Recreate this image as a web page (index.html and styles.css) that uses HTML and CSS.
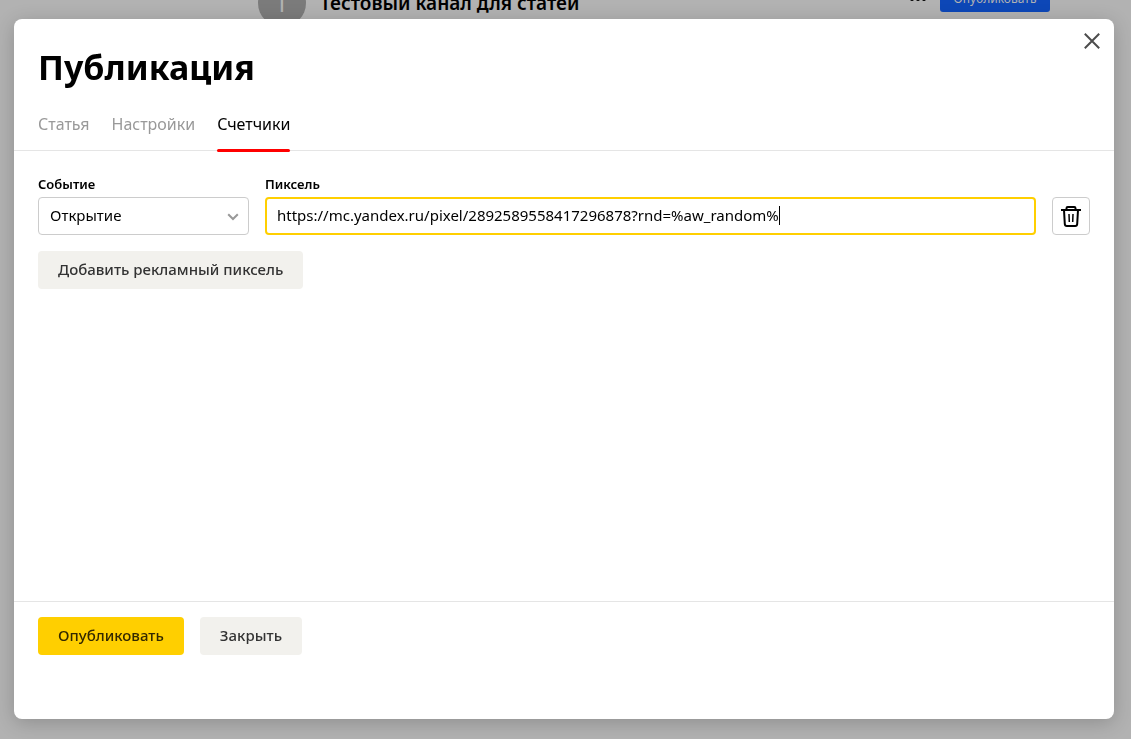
FILE: index.html
```html
<!DOCTYPE html>
<html lang="ru">
<head>
<meta charset="utf-8">
<meta name="viewport" content="width=device-width, initial-scale=1">
<title>Публикация</title>
<link rel="stylesheet" href="styles.css">
</head>
<body>
<header class="channel">
  <span class="channel-avatar">Т</span>
  <span class="channel-name">Тестовый канал для статей</span>
  <button class="channel-more" type="button" aria-label="Ещё">
    <svg width="16" height="4" viewBox="0 0 16 4" fill="currentColor"><circle cx="2" cy="2" r="2"/><circle cx="8" cy="2" r="2"/><circle cx="14" cy="2" r="2"/></svg>
  </button>
  <button class="channel-publish" type="button">Опубликовать</button>
</header>

<div class="overlay">
  <section class="modal" role="dialog" aria-labelledby="title">
    <button class="close" type="button" aria-label="Закрыть окно">
      <svg width="16" height="16" viewBox="0 0 16 16" fill="none" stroke="currentColor" stroke-width="2"><path d="M.8.8l14.400 14.400M15.200.8L.8 15.200"/></svg>
    </button>
    <h1 class="title" id="title">Публикация</h1>
    <nav class="tabs">
      <a class="tab" href="#article">Статья</a>
      <a class="tab" href="#settings">Настройки</a>
      <a class="tab tab-active" href="#counters">Счетчики</a>
    </nav>
    <form class="content">
      <div class="row">
        <div class="field field-event">
          <label class="label" for="event">Событие</label>
          <div class="select-box">
            <select class="select" id="event"><option>Открытие</option></select>
            <svg class="chevron" width="12" height="8" viewBox="0 0 12 8" fill="none" stroke="currentColor" stroke-width="2"><path d="M1.200 1.200L6 6l4.800-4.800"/></svg>
          </div>
        </div>
        <div class="field field-pixel">
          <label class="label" for="pixel">Пиксель</label>
          <div class="input-box">
            <input class="input" id="pixel" type="text" value="https://mc.yandex.ru/pixel/2892589558417296878?rnd=%aw_random%">
            <span class="caret"></span>
          </div>
        </div>
        <button class="remove" type="button" aria-label="Удалить">
          <svg width="20" height="22" viewBox="0 0 20 22" fill="none" stroke="currentColor" stroke-width="2"><path d="M0 5h20M5.500 4.500V3.200Q5.500 2 6.700 2h6.600q1.200 0 1.200 1.200v1.300M3 5l.8 14q.1 2 2 2h8.400q1.900 0 2-2L17 5"/><path d="M8 9l.3 8M12 9l-.3 8" stroke-width="1.500"/></svg>
        </button>
      </div>
      <button class="button" type="button">Добавить рекламный пиксель</button>
    </form>
    <footer class="footer">
      <button class="button button-primary" type="button">Опубликовать</button>
      <button class="button" type="button">Закрыть</button>
    </footer>
  </section>
</div>
</body>
</html>
```
FILE: styles.css
```css
* { box-sizing: border-box; }

body {
  margin: 0;
  min-height: 100vh;
  overflow: hidden;
  background: #b2b2b2;
  color: #000;
  font: 16px/20px "Noto Sans", sans-serif;
}

button, input, select { font: inherit; color: inherit; margin: 0; }
button { border: 0; padding: 0; background: none; cursor: pointer; }
svg { display: block; }

/* Channel bar, scrolled partly out of view */
.channel {
  display: flex;
  align-items: center;
  gap: 14px;
  height: 48px;
  margin-top: -21px;
  padding: 0 81px 0 258px;
}
.channel-avatar {
  width: 48px;
  height: 48px;
  border-radius: 50%;
  background: #7b7b7b;
  color: #b2b2b2;
  font-size: 24px;
  line-height: 48px;
  text-align: center;
}
.channel-name { flex: 1; font-size: 19px; font-weight: 600; }
.channel-more { padding-bottom: 8px; }
.channel-publish {
  align-self: flex-start;
  width: 110px;
  height: 33px;
  padding-top: 6px;
  border-radius: 3px;
  background: #0d47b7;
  color: #b2b2b2;
  font-size: 12px;
}

.overlay {
  position: fixed;
  inset: 0;
  display: flex;
  padding: 19px 17px 20px 14px;
}
.modal {
  position: relative;
  flex: 1;
  display: flex;
  flex-direction: column;
  border-radius: 8px;
  background: #fff;
  box-shadow: 0 4px 20px rgba(0, 0, 0, .2);
}
.close { position: absolute; top: 14px; right: 14px; color: #4c4c4c; }
.title { margin: 0; padding: 24px 24px 0; font-size: 34px; line-height: 48px; font-weight: 700; }

.tabs { display: flex; gap: 22px; padding: 20px 24px 0; border-bottom: 1px solid #e5e5e5; }
.tab {
  margin-bottom: -2px;
  padding: 2px 0 14px;
  color: #999;
  font-size: 16px;
  line-height: 22px;
  text-decoration: none;
  border-bottom: 3px solid transparent;
}
.tab-active { color: #000; position: relative; }
.tab-active::after {
  content: "";
  position: absolute;
  inset: auto 0 -3px;
  height: 3px;
  border-radius: 2px;
  background: #f00;
}

.content { flex: 1; padding: 23px 24px; }
.row { display: flex; align-items: flex-end; gap: 16px; margin-bottom: 16px; }
.field { display: flex; flex-direction: column; gap: 3px; }
.field-event { width: 211px; }
.field-pixel { flex: 1; min-width: 0; }
.label { font-size: 13px; font-weight: 600; }

.select-box { position: relative; }
.select {
  display: block;
  width: 100%;
  height: 38px;
  padding: 0 32px 2px 11px;
  border: 1px solid #ccc;
  border-radius: 4px;
  background: #fff;
  appearance: none;
  font-size: 15px;
}
.chevron { position: absolute; top: 16px; right: 10px; color: #999; pointer-events: none; }

.input-box {
  display: flex;
  align-items: center;
  height: 38px;
  padding: 0 10px 2px;
  border: 2px solid #ffcf00;
  border-radius: 4px;
}
.input {
  field-sizing: content;
  min-width: 0;
  padding: 0;
  border: 0;
  outline: 0;
  background: none;
  font-size: 15px;
}
.caret { flex: none; width: 1px; height: 19px; background: #000; }

.remove {
  display: grid;
  place-items: center;
  width: 38px;
  height: 38px;
  border: 1px solid #ccc;
  border-radius: 4px;
}

.button {
  height: 38px;
  padding: 0 20px 2px;
  border-radius: 4px;
  background: #f2f1ed;
  color: #333;
  font-size: 15px;
  font-weight: 500;
}
.button-primary { background: #ffcf00; color: #332900; }

.footer { display: flex; gap: 16px; padding: 15px 24px 64px; border-top: 1px solid #e5e5e5; }
```
